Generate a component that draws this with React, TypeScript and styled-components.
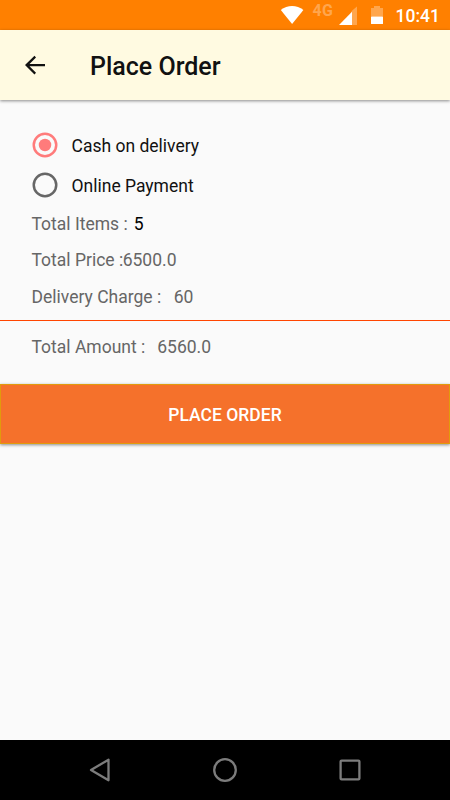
import React from "react";
import styled, { createGlobalStyle } from "styled-components";

const GlobalStyle = createGlobalStyle`
  * { box-sizing: border-box; }
  body { margin: 0; background: #fafafa; font-family: Roboto, "Liberation Sans", sans-serif; }
`;

const Screen = styled.div`
  display: flex;
  flex-direction: column;
  width: 450px;
  height: 800px;
  overflow: hidden;
  background: #fafafa;
`;

const StatusBar = styled.header`
  flex: none;
  display: flex;
  justify-content: flex-end;
  height: 30px;
  padding-right: 10px;
  background: #ff8000;
  color: #fff;
`;

const Network = styled.span`
  width: 27px;
  padding: 2px 0 0 0.5px;
  font-size: 16px;
  font-weight: 700;
  line-height: 18px;
  letter-spacing: 0.3px;
  color: #ffa64d;
`;

const Clock = styled.time`
  width: 45px;
  padding-left: 0.5px;
  font-size: 17.5px;
  font-weight: 500;
  line-height: 32px;
  white-space: nowrap;
`;

const SignalIcons = styled.svg`
  width: 56px;
  height: 30px;
`;

const WifiIcon = styled.svg`
  width: 32px;
  height: 30px;
`;

const AppBar = styled.div`
  flex: none;
  position: relative;
  display: flex;
  align-items: center;
  height: 70px;
  padding-left: 20px;
  background: #fffae1;
  box-shadow: 0 1px 3px rgba(0, 0, 0, 0.45);
`;

const BackButton = styled.button`
  display: flex;
  width: 30px;
  height: 30px;
  padding: 0;
  border: 0;
  background: none;
`;

const Title = styled.h1`
  margin: 4px 0 0 40px;
  font-size: 25px;
  font-weight: 500;
  line-height: 30px;
  color: #111;
`;

const Content = styled.main`
  flex: 1;
  display: flex;
  flex-direction: column;
  padding-top: 25px;
`;

const Option = styled.label`
  display: flex;
  align-items: center;
  height: 40px;
  padding-left: 30px;
  font-size: 17.5px;
  color: #111;
`;

const OptionText = styled.span`
  margin: 2px 0 0 11.5px;
  line-height: 22px;
`;

const Row = styled.div<{ $height: number }>`
  display: flex;
  align-items: center;
  height: ${(p) => p.$height}px;
  padding-left: 31.5px;
  font-size: 17.5px;
  line-height: 22px;
  color: #666;
  white-space: pre;
`;

const Value = styled.span<{ $gap: number; $strong?: boolean }>`
  margin-left: ${(p) => p.$gap}px;
  color: ${(p) => (p.$strong ? "#000" : "inherit")};
`;

const Divider = styled.hr`
  width: 100%;
  height: 1px;
  margin: 3px 0 7px;
  border: 0;
  background: #ff4500;
`;

const OrderButton = styled.button`
  height: 60px;
  margin-top: 18px;
  padding: 2px 0 0;
  border: 1px solid #e29a0c;
  background: #f5712b;
  box-shadow: 0 1px 3px rgba(0, 0, 0, 0.45);
  color: #fff;
  font: 500 17.5px/22px Roboto, "Liberation Sans", sans-serif;
`;

const NavBar = styled.nav`
  flex: none;
  display: flex;
  justify-content: center;
  gap: 95px;
  height: 60px;
  padding-top: 15px;
  background: #000;
`;

const NavIcon = styled.svg`
  width: 30px;
  height: 30px;
  fill: none;
  stroke: #7c7c7c;
  stroke-width: 2.3;
  stroke-linejoin: round;
`;

const Radio = ({ checked }: { checked?: boolean }) => (
  <svg width="30" height="30" viewBox="0 0 30 30">
    <circle cx="15" cy="15" r="11.25" fill="none" stroke={checked ? "#ff7b7b" : "#666"} strokeWidth="2.5" />
    {checked && <circle cx="15" cy="15" r="6.25" fill="#ff7b7b" />}
  </svg>
);

export default function App() {
  return (
    <>
      <GlobalStyle />
      <Screen>
        <StatusBar>
          <WifiIcon viewBox="0 0 32 30">
            <path d="M.8 10C7.4 4.7 16.8 4.7 23.4 10L12.1 24Z" fill="#fff" />
          </WifiIcon>
          <Network>4G</Network>
          <SignalIcons viewBox="0 0 56 30">
            <path d="M12.6 11V25H18V6.5Z" fill="#ffa64d" />
            <path d="M0 25H13V11.8Z" fill="#fff" />
            <path d="M32 8h3V6h6v2h3v8.5H32Z" fill="#ffa64d" />
            <rect x="32" y="16.5" width="12" height="7.5" rx=".6" fill="#fff" />
          </SignalIcons>
          <Clock>10:41</Clock>
        </StatusBar>
        <AppBar>
          <BackButton aria-label="Back">
            <svg width="30" height="30" viewBox="0 0 24 24">
              <path d="M20 11.1H7.6l5.2-5.2L11.6 4.5 4 12l7.6 7.5 1.2-1.3-5.2-5.3H20v-1.8z" fill="#111" />
            </svg>
          </BackButton>
          <Title>Place Order</Title>
        </AppBar>
        <Content>
          <Option><Radio checked /><OptionText>Cash on delivery</OptionText></Option>
          <Option><Radio /><OptionText>Online Payment</OptionText></Option>
          <Row $height={38}>Total Items :<Value $gap={6} $strong>5</Value></Row>
          <Row $height={34}>Total Price :<Value $gap={-0.5}>6500.0</Value></Row>
          <Row $height={40}>Delivery Charge :<Value $gap={12.5}>60</Value></Row>
          <Divider />
          <Row $height={38}>Total Amount :<Value $gap={12}>6560.0</Value></Row>
          <OrderButton>PLACE ORDER</OrderButton>
        </Content>
        <NavBar>
          <NavIcon viewBox="0 0 30 30"><path d="M6 15L23.5 4.7V25.3Z" /></NavIcon>
          <NavIcon viewBox="0 0 30 30"><circle cx="15" cy="15" r="10.8" /></NavIcon>
          <NavIcon viewBox="0 0 30 30"><rect x="5.6" y="5.6" width="18.8" height="18.8" rx="1" /></NavIcon>
        </NavBar>
      </Screen>
    </>
  );
}
